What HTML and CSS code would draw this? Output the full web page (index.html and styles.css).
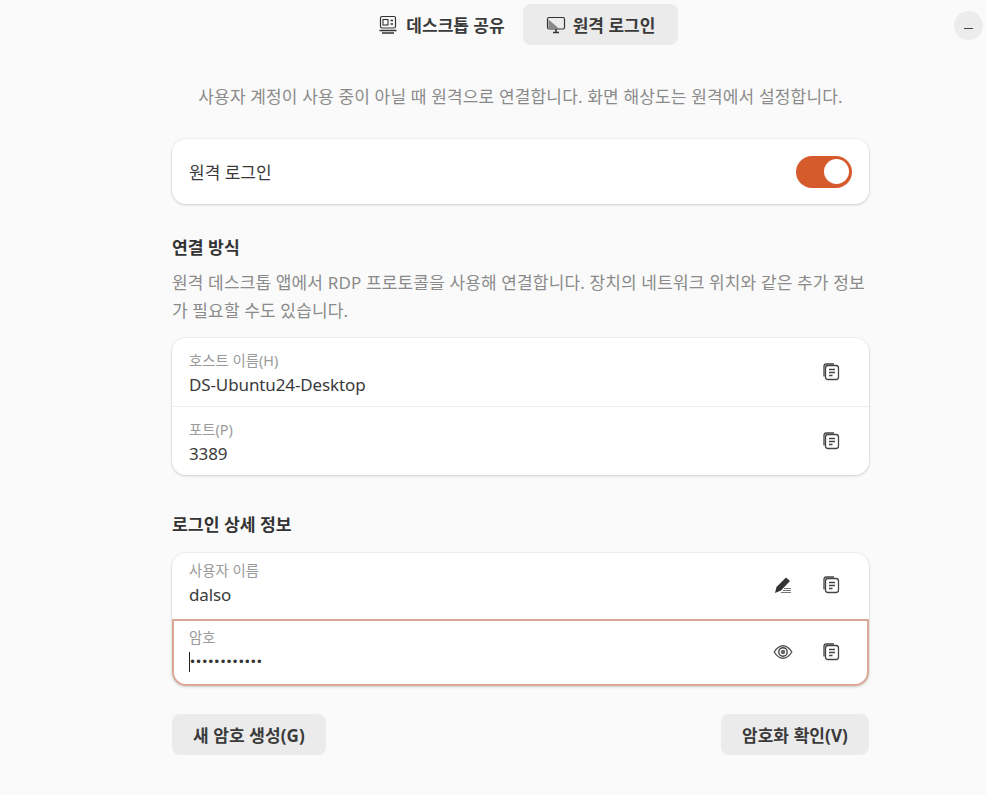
FILE: index.html
```html
<!DOCTYPE html>
<html lang="ko">
<head>
<meta charset="utf-8">
<title>원격 로그인</title>
<link rel="stylesheet" href="styles.css">
</head>
<body>
<div class="window">
  <header class="topbar">
    <nav class="tabs">
      <div class="tab">
        <svg class="ico" viewBox="0 0 20 20"><rect x="2.5" y="1.5" width="15" height="11.5" rx="1.5" fill="none" stroke="#333" stroke-width="1.2"/><rect x="5" y="4.5" width="5" height="5.5" fill="none" stroke="#333" stroke-width="1.1"/><path d="M12.5 5.5h2.5M12.5 9h2.5" stroke="#333" stroke-width="1.6"/><path d="M1.5 15.5h17M4 18h12" stroke="#333" stroke-width="1.3"/></svg>
        <span>데스크톱 공유</span>
      </div>
      <div class="tab active">
        <svg class="ico" viewBox="0 0 20 20"><rect x="1.5" y="2.5" width="17" height="11.5" rx="1.5" fill="none" stroke="#333" stroke-width="1.2"/><path d="M2.5 4.5l11 9.5h-11z" fill="#888"/><path d="M7 17.5h6M10 14v3.5" stroke="#333" stroke-width="1.5"/></svg>
        <span>원격 로그인</span>
      </div>
    </nav>
    <button class="minimize" aria-label="최소화"><i></i></button>
  </header>

  <main class="content">
    <p class="intro">사용자 계정이 사용 중이 아닐 때 원격으로 연결합니다. 화면 해상도는 원격에서 설정합니다.</p>

    <section class="card switch-row">
      <span class="row-title">원격 로그인</span>
      <span class="switch"><i></i></span>
    </section>

    <h2 class="heading first">연결 방식</h2>
    <p class="desc">원격 데스크톱 앱에서 RDP 프로토콜을 사용해 연결합니다. 장치의 네트워크 위치와 같은 추가 정보가 필요할 수도 있습니다.</p>

    <section class="card">
      <div class="field">
        <div class="field-text"><label>호스트 이름(H)</label><div class="value">DS-Ubuntu24-Desktop</div></div>
        <svg class="ico action" viewBox="0 0 20 20"><use href="#copy"/></svg>
      </div>
      <div class="field sep">
        <div class="field-text"><label>포트(P)</label><div class="value">3389</div></div>
        <svg class="ico action" viewBox="0 0 20 20"><use href="#copy"/></svg>
      </div>
    </section>

    <h2 class="heading second">로그인 상세 정보</h2>

    <section class="card">
      <div class="field user">
        <div class="field-text"><label>사용자 이름</label><div class="value">dalso</div></div>
        <svg class="ico action" viewBox="0 0 20 20"><path d="M2 18l1.5-6L13 2.5 17 6l-9 9.5z" fill="#333"/><path d="M11 13.5h7M10 15.5h8M8 17.5h10" stroke="#666" stroke-width=".9"/></svg>
        <svg class="ico action" viewBox="0 0 20 20"><use href="#copy"/></svg>
      </div>
      <div class="field focused">
        <div class="field-text"><label>암호</label><div class="value secret"><b class="caret"></b>••••••••••••</div></div>
        <svg class="ico action" viewBox="0 0 20 20"><path d="M1.2 10C4 5.5 7 3.7 10 3.7S16 5.5 18.8 10C16 14.5 13 16.3 10 16.3S4 14.5 1.2 10z" fill="none" stroke="#555" stroke-width="1.4"/><circle cx="10" cy="10" r="4.2" fill="none" stroke="#444" stroke-width="1.4"/><circle cx="10" cy="10" r="2.2" fill="#666"/></svg>
        <svg class="ico action" viewBox="0 0 20 20"><use href="#copy"/></svg>
      </div>
    </section>

    <div class="buttons">
      <button class="btn">새 암호 생성(G)</button>
      <button class="btn">암호화 확인(V)</button>
    </div>
  </main>
</div>
<svg class="defs" width="0" height="0"><defs><g id="copy"><path d="M3 14.5V4.5A2.5 2.5 0 0 1 5.5 2H13" fill="none" stroke="#444" stroke-width="1.3"/><rect x="4.5" y="3.5" width="13" height="14" rx="2.5" fill="#fff" stroke="#444" stroke-width="1.3"/><path d="M8 7.5h6M8 10.5h6M8 13.5h3.5" stroke="#444" stroke-width="1.3"/></g></defs></svg>
</body>
</html>
```

FILE: styles.css
```css
* { box-sizing: border-box; }
html, body { margin: 0; height: 100%; }
body {
  background: #fafafa;
  color: #333;
  font-family: "Noto Sans", "Noto Sans CJK KR", sans-serif;
  font-size: 17px;
  overflow: hidden;
}
.window { width: 986px; height: 795px; }
.topbar { height: 46px; padding: 4px 0 0 56px; display: flex; justify-content: center; position: relative; }
.tabs { display: flex; gap: 4px; height: 41px; }
.tab {
  width: 155px; height: 41px; border-radius: 8px;
  display: flex; align-items: center; justify-content: center; gap: 8px;
  font-weight: 700; font-size: 17px; color: #3a3a3a;
}
.tab.active { background: #ebebeb; gap: 7px; }
.ico { width: 20px; height: 20px; flex: none; }
.minimize {
  position: absolute; top: 11px; right: 3px;
  width: 29px; height: 29px; border: 0; border-radius: 50%; padding: 0;
  background: #ececec; display: flex; align-items: center; justify-content: center;
}
.minimize i { display: block; width: 9px; height: 1px; margin-top: 6px; background: #444; }
.content { width: 697px; margin: 0 0 0 172px; }
.intro {
  margin: 39px -10px 0; height: 24px; line-height: 24px; text-align: center; white-space: nowrap;
  color: #8a8a8a; letter-spacing: .16px;
}
.card {
  background: #fff; border-radius: 14px;
  box-shadow: 0 0 0 1px rgba(0,0,0,.03), 0 1px 3px rgba(0,0,0,.16);
}
.switch-row {
  margin-top: 30px; height: 65px; padding: 0 17px 0 17px;
  display: flex; align-items: center; justify-content: space-between;
}
.row-title { color: #3a3a3a; }
.switch {
  width: 56px; height: 32px; border-radius: 16px; background: #d55b2d;
  display: flex; align-items: center; justify-content: flex-end; padding-right: 3px;
}
.switch i { width: 25px; height: 25px; border-radius: 50%; background: #fff; display: block; }
.heading { margin: 0; font-size: 17.2px; font-weight: 700; line-height: 24px; color: #333; }
.heading.first { margin-top: 32px; }
.heading.second { margin: 38px 0 16px; }
.desc {
  margin: 9px 0 13px; line-height: 28px; color: #8a8a8a; height: 56px; letter-spacing: .14px;
}
.field { height: 68px; padding: 0 28px 0 17px; display: flex; align-items: center; gap: 28px; }
.field.sep { height: 69px; border-top: 1px solid #ececec; }
.field-text { flex: 1; min-width: 0; padding-top: 5px; }
.field label { display: block; font-size: 14.4px; line-height: 17px; color: #9a9a9a; }
.value { font-size: 17px; line-height: 24px; color: #3a3a3a; margin-top: 4px; letter-spacing: -.12px; }
.secret { position: relative; font-size: 12px; letter-spacing: -1px; color: #333; font-family: "DejaVu Sans", sans-serif; }
.caret { position: absolute; left: 0; top: 2px; width: 1px; height: 20px; background: #222; }
.user { height: 66px; }
.user .field-text, .focused .field-text { padding: 0 0 3px; }
.user .action, .focused .action { margin-top: -2px; }
.focused {
  height: 67px;
  border: 2px solid #dba898; border-radius: 0 0 14px 14px;
  padding-left: 15px; padding-right: 26px;
}
.buttons { display: flex; justify-content: space-between; margin-top: 28px; }
.btn {
  height: 41px; padding: 0 21px; border: 0; border-radius: 8px; background: #ebebeb;
  font: 700 17px "Noto Sans", "Noto Sans CJK KR", sans-serif; color: #3a3a3a; letter-spacing: .1px;
}
.defs { position: absolute; }
```
